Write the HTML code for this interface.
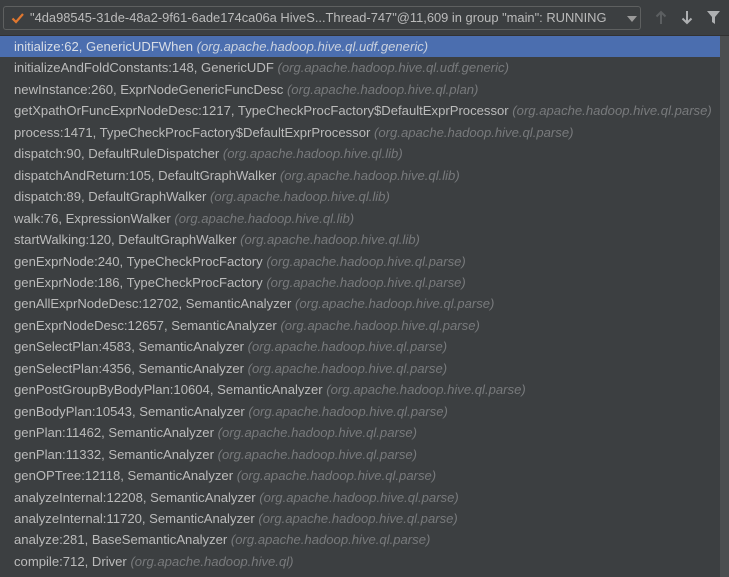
<!DOCTYPE html><html><head><style>
html,body{margin:0;width:729px;height:577px;overflow:hidden}
body{background:#3c3f41;font-family:"Liberation Sans","Noto Sans CJK SC",sans-serif;font-size:13.1px;color:#bbbbbb;position:relative}
.hdr{position:absolute;left:0;top:0;width:729px;height:35px;background:#3c3f41;border-bottom:1px solid #323232}
.combo{position:absolute;left:3px;top:6px;width:638px;height:24px;border:1px solid #5e6060;border-radius:3px;background:#3c3f41;box-sizing:border-box;white-space:nowrap;line-height:22px;font-size:12.9px;color:#bbb}
.combo .t{position:absolute;left:26px;top:0}
.list{position:absolute;left:0;top:36px;width:720px;height:541px;overflow:hidden}
.r{height:21.46px;line-height:21.46px;padding-left:14px;white-space:nowrap}
.r i{color:#787a7c}
.sel{background:#4b6eaf;color:#d8dde6}
.sel i{color:#c8d0de}
.sb{position:absolute;left:720px;top:36px;width:9px;height:541px;background:#4b4e50}
</style></head><body>
<div class="hdr">
<div class="combo"><svg style="position:absolute;left:7px;top:5px" width="13" height="12"><path d="M1.5 6.5 L5 10 L12 2" stroke="#e0772f" stroke-width="2.2" fill="none"/></svg><span class="t">"4da98545-31de-48a2-9f61-6ade174ca06a HiveS...Thread-747"@11,609 in group "main": RUNNING</span><svg style="position:absolute;left:623px;top:9px" width="10" height="6"><path d="M0 0H10L5 6Z" fill="#9a9a9a"/></svg></div>
<svg style="position:absolute;left:655px;top:10px" width="12" height="15"><path d="M6 14V2M1.5 6.5L6 2L10.5 6.5" stroke="#5c5f61" stroke-width="2" fill="none"/></svg>
<svg style="position:absolute;left:681px;top:10px" width="12" height="15"><path d="M6 1V13M1.5 8.5L6 13L10.5 8.5" stroke="#aeb0b2" stroke-width="2" fill="none"/></svg>
<svg style="position:absolute;left:707px;top:11px" width="13" height="13"><path d="M0 0H13L8 6V13L5 11V6Z" fill="#aeb0b2"/></svg>
</div>
<div class="list">
<div class="r sel">initialize:62, GenericUDFWhen <i>(org.apache.hadoop.hive.ql.udf.generic)</i></div>
<div class="r">initializeAndFoldConstants:148, GenericUDF <i>(org.apache.hadoop.hive.ql.udf.generic)</i></div>
<div class="r">newInstance:260, ExprNodeGenericFuncDesc <i>(org.apache.hadoop.hive.ql.plan)</i></div>
<div class="r">getXpathOrFuncExprNodeDesc:1217, TypeCheckProcFactory$DefaultExprProcessor <i>(org.apache.hadoop.hive.ql.parse)</i></div>
<div class="r">process:1471, TypeCheckProcFactory$DefaultExprProcessor <i>(org.apache.hadoop.hive.ql.parse)</i></div>
<div class="r">dispatch:90, DefaultRuleDispatcher <i>(org.apache.hadoop.hive.ql.lib)</i></div>
<div class="r">dispatchAndReturn:105, DefaultGraphWalker <i>(org.apache.hadoop.hive.ql.lib)</i></div>
<div class="r">dispatch:89, DefaultGraphWalker <i>(org.apache.hadoop.hive.ql.lib)</i></div>
<div class="r">walk:76, ExpressionWalker <i>(org.apache.hadoop.hive.ql.lib)</i></div>
<div class="r">startWalking:120, DefaultGraphWalker <i>(org.apache.hadoop.hive.ql.lib)</i></div>
<div class="r">genExprNode:240, TypeCheckProcFactory <i>(org.apache.hadoop.hive.ql.parse)</i></div>
<div class="r">genExprNode:186, TypeCheckProcFactory <i>(org.apache.hadoop.hive.ql.parse)</i></div>
<div class="r">genAllExprNodeDesc:12702, SemanticAnalyzer <i>(org.apache.hadoop.hive.ql.parse)</i></div>
<div class="r">genExprNodeDesc:12657, SemanticAnalyzer <i>(org.apache.hadoop.hive.ql.parse)</i></div>
<div class="r">genSelectPlan:4583, SemanticAnalyzer <i>(org.apache.hadoop.hive.ql.parse)</i></div>
<div class="r">genSelectPlan:4356, SemanticAnalyzer <i>(org.apache.hadoop.hive.ql.parse)</i></div>
<div class="r">genPostGroupByBodyPlan:10604, SemanticAnalyzer <i>(org.apache.hadoop.hive.ql.parse)</i></div>
<div class="r">genBodyPlan:10543, SemanticAnalyzer <i>(org.apache.hadoop.hive.ql.parse)</i></div>
<div class="r">genPlan:11462, SemanticAnalyzer <i>(org.apache.hadoop.hive.ql.parse)</i></div>
<div class="r">genPlan:11332, SemanticAnalyzer <i>(org.apache.hadoop.hive.ql.parse)</i></div>
<div class="r">genOPTree:12118, SemanticAnalyzer <i>(org.apache.hadoop.hive.ql.parse)</i></div>
<div class="r">analyzeInternal:12208, SemanticAnalyzer <i>(org.apache.hadoop.hive.ql.parse)</i></div>
<div class="r">analyzeInternal:11720, SemanticAnalyzer <i>(org.apache.hadoop.hive.ql.parse)</i></div>
<div class="r">analyze:281, BaseSemanticAnalyzer <i>(org.apache.hadoop.hive.ql.parse)</i></div>
<div class="r">compile:712, Driver <i>(org.apache.hadoop.hive.ql)</i></div>
<div class="r">compileInternal:1803, Driver <i>(org.apache.hadoop.hive.ql)</i></div>
</div>
<div class="sb"></div>
</body></html>
